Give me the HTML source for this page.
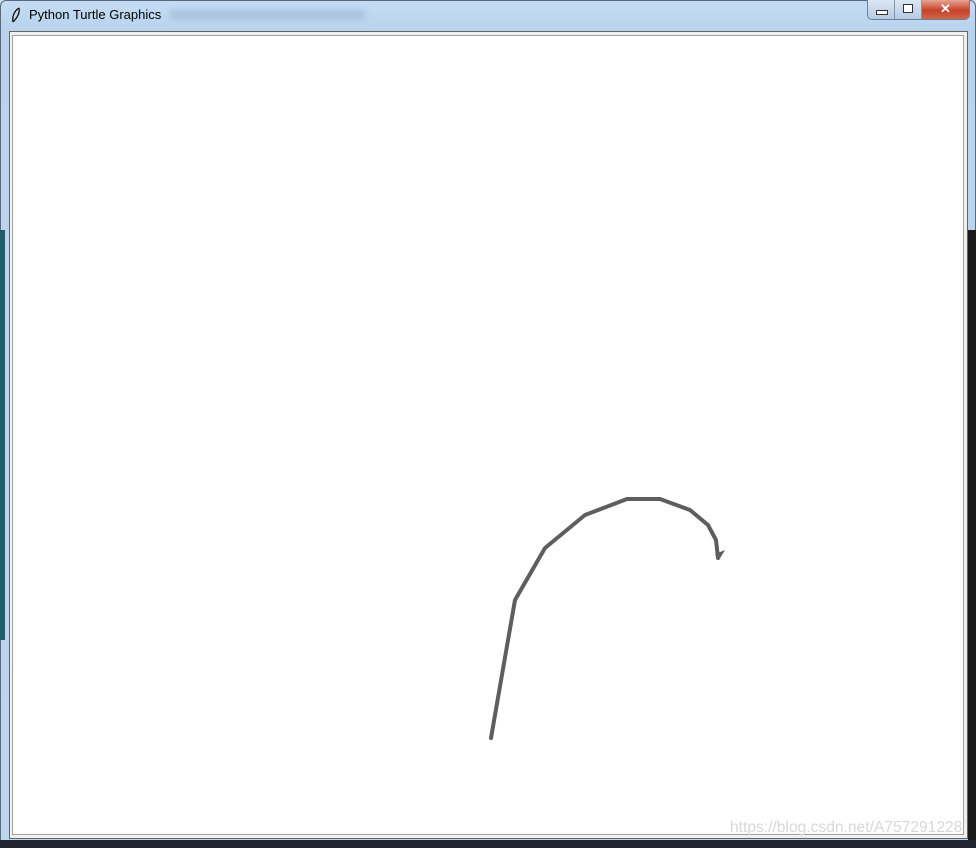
<!DOCTYPE html><html><head><style>
body{margin:0;width:976px;height:848px;overflow:hidden;background:#cfe0f1;font-family:"Liberation Sans",sans-serif;position:relative}
.frame{position:absolute;left:0;top:0;width:974px;height:846px;border:1px solid #5a6a7a;border-radius:6px 6px 0 0;background:linear-gradient(#c4dcf3,#b9d3ee 30px,#bcd5ee);}
.title{position:absolute;left:29px;top:7px;font-size:13px;color:#000}
.blur{position:absolute;left:170px;top:10px;width:195px;height:10px;background:#a9c3de;filter:blur(3px)}
.canvasbox{position:absolute;left:9px;top:31px;width:957px;height:806px;border:1px solid #646464;background:#f0f0f0}
.canvas{position:absolute;left:12px;top:35px;width:952px;height:800px;background:#fff;border:1px solid #a0a0a0;box-sizing:border-box}
.btns{position:absolute;left:867px;top:0;width:101px;height:19px;border:1px solid #6d7f93;border-top:none;border-radius:0 0 5px 5px;overflow:hidden;display:flex}
.b{height:19px;background:linear-gradient(#dbe7f4,#b5cbe3);border-right:1px solid #8595a8}
.x{background:linear-gradient(#e7a592,#c6412a 55%,#d2664a);color:#fff;font-weight:bold;text-align:center;font-size:13px;line-height:18px}
.wm{position:absolute;left:730px;top:819px;font-size:15.6px;color:#d8d8d8}
</style></head><body>
<div class="frame"></div>
<div style="position:absolute;left:0;top:230px;width:5px;height:410px;background:#1d5d63"></div>
<div style="position:absolute;left:968px;top:230px;width:8px;height:610px;background:#1a1a1a"></div>
<div style="position:absolute;left:0;top:840px;width:976px;height:8px;background:#1e2530"></div>
<svg style="position:absolute;left:11px;top:7px" width="10" height="16"><path d="M8 1 C3 4 1 10 2 15 M8 1 C9 6 6 11 2 15" stroke="#000" fill="none" stroke-width="1.2"/></svg>
<div class="title">Python Turtle Graphics</div><div class="blur"></div>
<div class="btns"><div class="b" style="width:26px"><div style="margin:10px 0 0 8px;width:10px;height:3px;border:1px solid #333;background:#fff"></div></div><div class="b" style="width:26px"><div style="margin:4px 0 0 8px;width:8px;height:7px;border:1px solid #333;background:#fff"></div></div><div class="b x" style="width:47px;border:none">✕</div></div>
<div class="canvasbox"></div>
<div class="canvas"></div>
<svg style="position:absolute;left:0;top:0" width="976" height="848"><polyline points="491,738 515,600 545,548 585,515 627,499 660,499 690,510 708,525 716,540 718,558" fill="none" stroke="#5e5e5e" stroke-width="4" stroke-linejoin="round" stroke-linecap="round"/><path d="M715,554 L725,550 L719,560 Z" fill="#5e5e5e"/></svg>
<div class="wm">https://blog.csdn.net/A757291228</div>
</body></html>
